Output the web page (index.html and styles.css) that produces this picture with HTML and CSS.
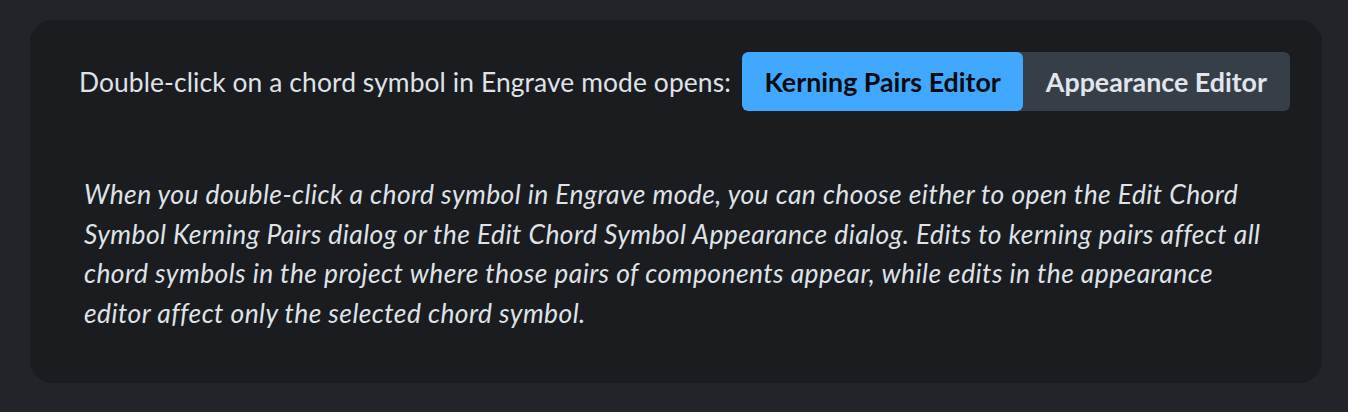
FILE: index.html
```html
<!DOCTYPE html>
<html lang="en">
<head>
<meta charset="utf-8">
<title>Chord symbol option</title>
<link rel="stylesheet" href="styles.css">
</head>
<body>
<div class="card">
  <div class="row">
    <span class="label">Double-click on a chord symbol in Engrave mode opens:</span>
    <div class="seg">
      <button class="seg-btn active">Kerning Pairs Editor</button>
      <button class="seg-btn">Appearance Editor</button>
    </div>
  </div>
  <p class="desc">When you double-click a chord symbol in Engrave mode, you can choose either to open the Edit Chord Symbol Kerning Pairs dialog or the Edit Chord Symbol Appearance dialog. Edits to kerning pairs affect all chord symbols in the project where those pairs of components appear, while edits in the appearance editor affect only the selected chord symbol.</p>
</div>
</body>
</html>
```
FILE: styles.css
```css
html, body {
  margin: 0;
  padding: 0;
  background: #212529;
  height: 100%;
}
body {
  padding: 20px 26px 0 30px;
  box-sizing: border-box;
  font-family: Lato, "Liberation Sans", sans-serif;
  color: #dfe3e8;
}
.card {
  background: #1a1c20;
  border-radius: 22px;
  height: 363px;
  box-sizing: border-box;
  padding: 32px 32px 0 49px;
}
.row {
  display: flex;
  align-items: center;
  justify-content: space-between;
}
.label {
  font-size: 26.4px;
  letter-spacing: 0.1px;
  color: #dfe3e8;
}
.seg {
  display: flex;
  background: #363e48;
  border-radius: 6px;
  overflow: hidden;
}
.seg-btn {
  border: none;
  font-family: inherit;
  font-weight: 700;
  font-size: 26.8px;
  height: 59px;
  padding: 0 23px;
  background: transparent;
  color: #e2e6ec;
  border-radius: 6px;
}
.seg-btn.active {
  background: #40a8ff;
  color: #0a0c0f;
  padding: 0 22px;
}
.desc {
  margin: 64px 18px 0 5px;
  font-style: italic;
  font-size: 26.4px;
  letter-spacing: 0.45px;
  line-height: 39.5px;
  color: #dfe3e8;
}
```
